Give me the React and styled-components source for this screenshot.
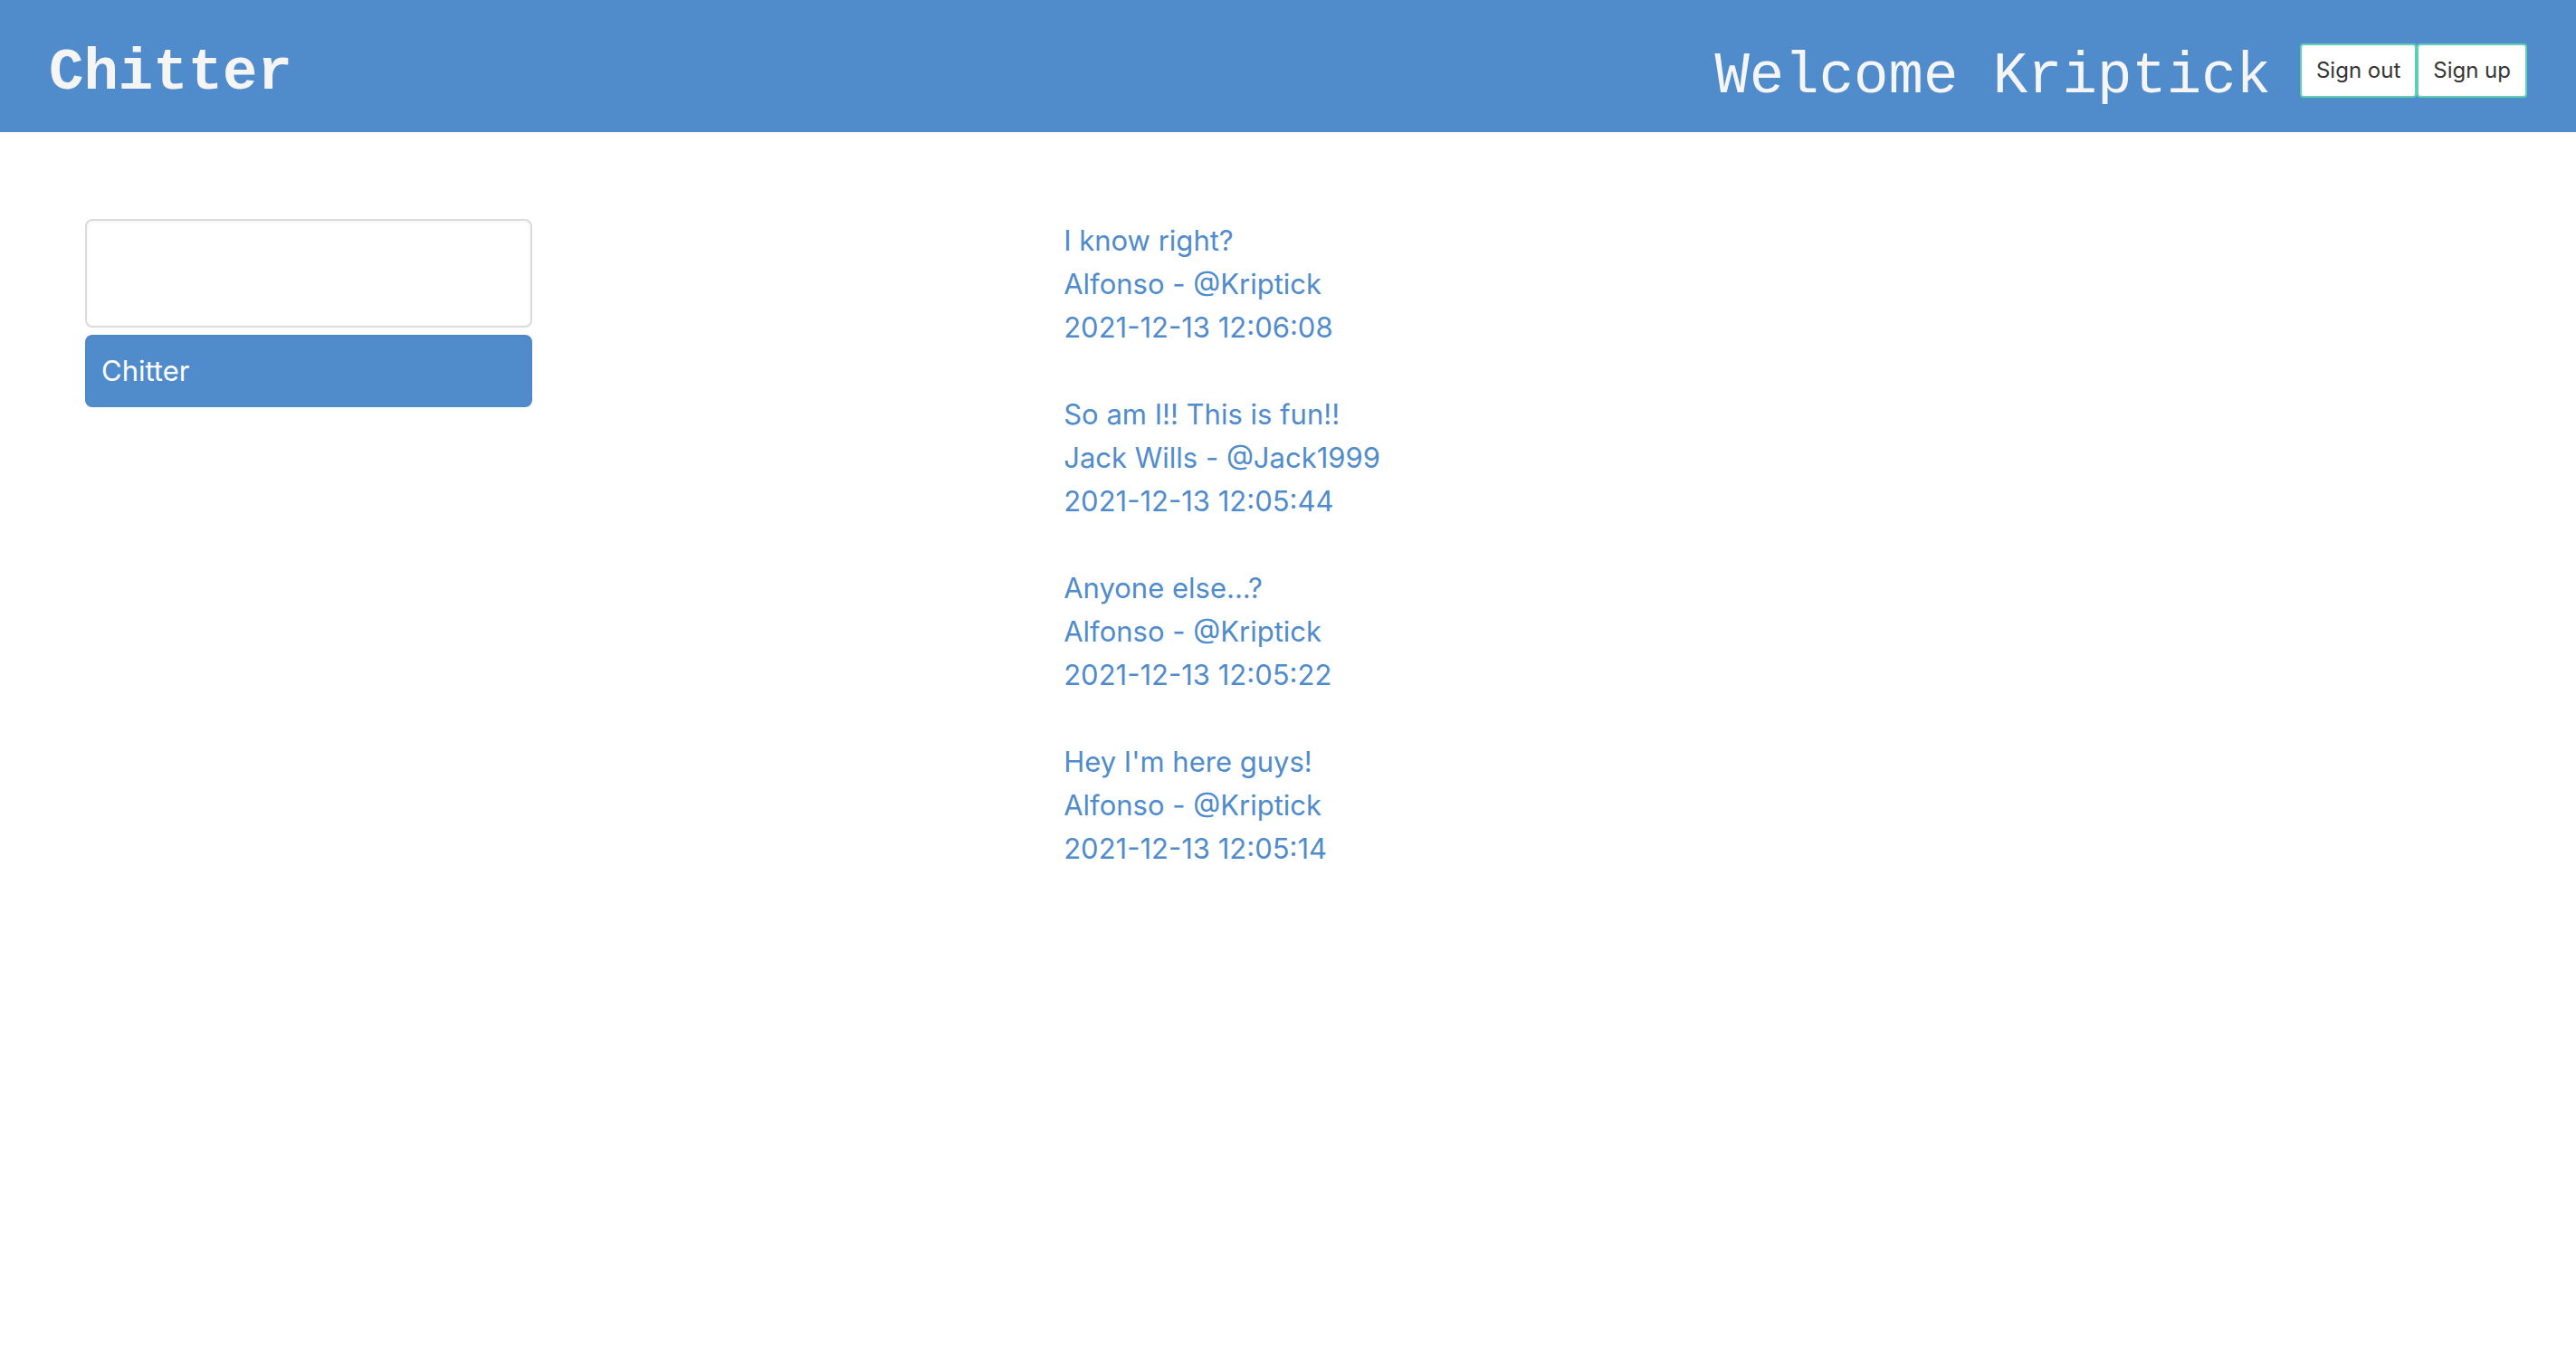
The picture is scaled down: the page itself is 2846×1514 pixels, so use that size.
import React, { useState } from "react";
import styled, { createGlobalStyle } from "styled-components";

const BLUE = "#508ccb";

const GlobalStyle = createGlobalStyle`
  *, *::before, *::after { box-sizing: border-box; }
  body {
    margin: 0;
    background: #fff;
    color: ${BLUE};
    font-family: Inter, "Liberation Sans", sans-serif;
    font-size: 31px;
    line-height: 48px;
  }
`;

const Header = styled.header`
  display: flex;
  align-items: flex-start;
  justify-content: space-between;
  padding: 48px 54px 24px;
  background: ${BLUE};
  color: #f5f5f5;
  font-family: "Liberation Mono", "Courier New", monospace;
  font-size: 64px;
`;

const Brand = styled.h1`
  margin: 0;
  font-size: inherit;
  font-weight: 700;
  line-height: 66px;
`;

const Account = styled.div`
  display: flex;
  align-items: flex-start;
  gap: 32px;
`;

const Welcome = styled.p`
  margin: 0;
  line-height: 74px;
`;

const AccountActions = styled.nav`
  display: flex;
`;

const AccountButton = styled.button`
  height: 60px;
  padding: 0 16px;
  border: 2px solid #5fceb2;
  border-radius: 4px;
  background: #fff;
  box-shadow: inset 0 1px 4px rgba(10, 10, 10, 0.05);
  color: #363636;
  font-family: Inter, "Liberation Sans", sans-serif;
  font-size: 24px;
  line-height: 36px;
  cursor: pointer;
`;

const Main = styled.main`
  display: grid;
  grid-template-columns: 24fr 35fr;
  padding: 96px 94px;
`;

const Composer = styled.form`
  display: flex;
  flex-direction: column;
  gap: 8px;
  width: 100%;
  max-width: 494px;
`;

const ChitInput = styled.textarea`
  height: 120px;
  padding: 16px;
  border: 2px solid #dbdbdb;
  border-radius: 8px;
  background: #fff;
  box-shadow: inset 0 1px 4px rgba(10, 10, 10, 0.05);
  color: #363636;
  font: inherit;
  resize: none;
`;

const PostButton = styled.button`
  height: 80px;
  padding: 0 18px;
  border: 0;
  border-radius: 8px;
  background: ${BLUE};
  box-shadow: inset 0 1px 4px rgba(10, 10, 10, 0.05);
  color: #fff;
  font: inherit;
  text-align: left;
  cursor: pointer;
`;

const Feed = styled.section`
  display: flex;
  flex-direction: column;
  gap: 48px;
`;

const Line = styled.p`
  margin: 0;
`;

const chits = [
  { text: "I know right?", name: "Alfonso", handle: "Kriptick", time: "2021-12-13 12:06:08" },
  { text: "So am I!! This is fun!!", name: "Jack Wills", handle: "Jack1999", time: "2021-12-13 12:05:44" },
  { text: "Anyone else...?", name: "Alfonso", handle: "Kriptick", time: "2021-12-13 12:05:22" },
  { text: "Hey I'm here guys!", name: "Alfonso", handle: "Kriptick", time: "2021-12-13 12:05:14" },
];

function Chit({ text, name, handle, time }) {
  return (
    <article>
      <Line>{text}</Line>
      <Line>{`${name} - @${handle}`}</Line>
      <Line as="time">{time}</Line>
    </article>
  );
}

export default function App() {
  const [draft, setDraft] = useState("");
  return (
    <>
      <GlobalStyle />
      <Header>
        <Brand>Chitter</Brand>
        <Account>
          <Welcome>Welcome Kriptick</Welcome>
          <AccountActions>
            <AccountButton type="button">Sign out</AccountButton>
            <AccountButton type="button">Sign up</AccountButton>
          </AccountActions>
        </Account>
      </Header>
      <Main>
        <Composer onSubmit={(e) => e.preventDefault()}>
          <ChitInput
            aria-label="Your chit"
            value={draft}
            onChange={(e) => setDraft(e.target.value)}
          />
          <PostButton type="submit">Chitter</PostButton>
        </Composer>
        <Feed>
          {chits.map((chit) => (
            <Chit key={chit.time} {...chit} />
          ))}
        </Feed>
      </Main>
    </>
  );
}
